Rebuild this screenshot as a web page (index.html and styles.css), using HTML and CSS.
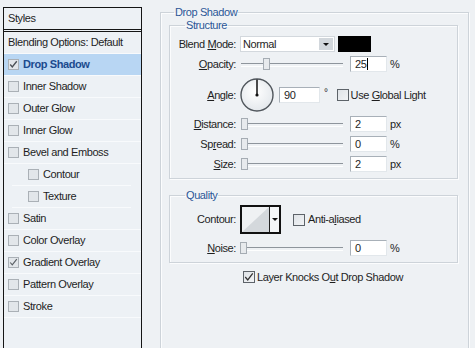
FILE: index.html
```html
<!DOCTYPE html>
<html>
<head>
<meta charset="utf-8">
<title>Layer Style - Drop Shadow</title>
<link rel="stylesheet" href="styles.css">
</head>
<body>
<div class="dialog">
  <aside class="styles">
    <div class="styles-head">Styles</div>
    <div class="style-row plain">Blending Options: Default</div>
    <div class="style-row active"><span class="cb"><svg viewBox="0 0 11 11" width="9" height="9"><path d="M1.5 5.5 L4 8.5 L9.5 1.5" fill="none" stroke="#4a4f55" stroke-width="1.6"/></svg></span>Drop Shadow</div>
    <div class="style-row"><span class="cb"></span>Inner Shadow</div>
    <div class="style-row"><span class="cb"></span>Outer Glow</div>
    <div class="style-row"><span class="cb"></span>Inner Glow</div>
    <div class="style-row"><span class="cb"></span>Bevel and Emboss</div>
    <div class="style-row sub"><span class="cb"></span>Contour</div>
    <div class="style-row sub"><span class="cb"></span>Texture</div>
    <div class="style-row"><span class="cb"></span>Satin</div>
    <div class="style-row"><span class="cb"></span>Color Overlay</div>
    <div class="style-row"><span class="cb"><svg viewBox="0 0 11 11" width="9" height="9"><path d="M1.5 5.5 L4 8.5 L9.5 1.5" fill="none" stroke="#5a5f65" stroke-width="1.4"/></svg></span>Gradient Overlay</div>
    <div class="style-row"><span class="cb"></span>Pattern Overlay</div>
    <div class="style-row"><span class="cb"></span>Stroke</div>
  </aside>

  <main class="panel">
    <fieldset class="group outer">
      <legend>Drop Shadow</legend>

      <fieldset class="group sub structure">
        <legend>Structure</legend>
        <div class="row">
          <span class="lbl">Blend <u>M</u>ode:</span>
          <div class="select"><span>Normal</span><span class="sel-btn"><span class="tri"></span></span></div>
          <div class="swatch"></div>
        </div>
        <div class="row">
          <span class="lbl"><u>O</u>pacity:</span>
          <div class="slider"><span class="thumb" style="left:23px"></span></div>
          <div class="field">25<span class="caret"></span></div>
          <span class="unit">%</span>
        </div>
        <div class="row angle">
          <span class="lbl"><u>A</u>ngle:</span>
          <svg class="dial" viewBox="0 0 34 34" width="34" height="34">
            <defs>
              <radialGradient id="dg" cx="0.45" cy="0.4" r="0.6">
                <stop offset="0" stop-color="#ffffff"/>
                <stop offset="1" stop-color="#e4e8ec"/>
              </radialGradient>
            </defs>
            <circle cx="17" cy="17" r="16" fill="url(#dg)" stroke="#50565c" stroke-width="1.4"/>
            <line x1="17" y1="17" x2="17" y2="1.5" stroke="#111" stroke-width="1.5"/>
            <circle cx="17" cy="17" r="1.6" fill="#111"/>
          </svg>
          <div class="field wide">90</div>
          <span class="deg">°</span>
          <span class="cb2"></span>
          <span class="cb-label">Use <u>G</u>lobal Light</span>
        </div>
        <div class="row">
          <span class="lbl"><u>D</u>istance:</span>
          <div class="slider"><span class="thumb" style="left:1px"></span></div>
          <div class="field">2</div>
          <span class="unit">px</span>
        </div>
        <div class="row">
          <span class="lbl">Sp<u>r</u>ead:</span>
          <div class="slider"><span class="thumb" style="left:1px"></span></div>
          <div class="field">0</div>
          <span class="unit">%</span>
        </div>
        <div class="row">
          <span class="lbl"><u>S</u>ize:</span>
          <div class="slider"><span class="thumb" style="left:1px"></span></div>
          <div class="field">2</div>
          <span class="unit">px</span>
        </div>
      </fieldset>

      <fieldset class="group sub quality">
        <legend>Quality</legend>
        <div class="row contour">
          <span class="lbl">Contour:</span>
          <div class="picker">
            <svg class="preview" viewBox="0 0 27 25" width="27" height="25" preserveAspectRatio="none">
              <rect x="0" y="0" width="27" height="25" fill="#eff1f3"/>
              <polygon points="0,25 27,0 27,25" fill="#d4d8dc"/>
            </svg>
            <span class="pick-btn"><span class="tri"></span></span>
          </div>
          <span class="cb2 aa"></span>
          <span class="cb-label">Anti-a<u>l</u>iased</span>
        </div>
        <div class="row noise">
          <span class="lbl"><u>N</u>oise:</span>
          <div class="slider"><span class="thumb" style="left:0px"></span></div>
          <div class="field">0</div>
          <span class="unit">%</span>
        </div>
      </fieldset>

      <div class="knock">
        <span class="cb2"><svg viewBox="0 0 12 12" width="10" height="10"><path d="M1.5 6 L4.5 9.5 L10.5 1.5" fill="none" stroke="#333" stroke-width="1.5"/></svg></span>
        <span class="cb-label">Layer Knocks O<u>u</u>t Drop Shadow</span>
      </div>
    </fieldset>
  </main>
</div>
</body>
</html>
```
FILE: styles.css
```css
* { box-sizing: border-box; }
html, body { margin: 0; padding: 0; }
body {
  width: 475px;
  height: 348px;
  overflow: hidden;
  background: #eef1f4;
  font: 11px/13px "Liberation Sans", Arial, sans-serif;
  letter-spacing: -0.4px;
  color: #1e1e1e;
}
.dialog {
  display: flex;
  align-items: flex-start;
  height: 348px;
  overflow: hidden;
}

/* ---------- Styles list ---------- */
.styles {
  margin: 7px 0 0 3px;
  width: 139px;
  height: 341px;
  flex: none;
  border: 1px solid #151515;
  border-bottom: none;
  background: #edf1f5;
}
.styles-head {
  height: 24px;
  padding-left: 4px;
  border-bottom: 3px double #151515;
  display: flex;
  align-items: center;
}
.style-row {
  height: 22px;
  border-bottom: 1px solid #f8fafc;
  display: flex;
  align-items: center;
  gap: 4px;
  padding-left: 4px;
  white-space: nowrap;
}
.style-row.sub { padding-left: 16px; }
.style-row.active {
  background: #b8d6f3;
  color: #1b4a8e;
  font-weight: bold;
}
.cb {
  width: 11px;
  height: 11px;
  flex: none;
  border: 1px solid #aab0b6;
  background: #e2e6ea;
  display: inline-flex;
  align-items: center;
  justify-content: center;
}

/* ---------- Right panel ---------- */
.panel {
  margin: 6px 0 0 18px;
  width: 309px;
  flex: none;
}
.group {
  margin: 0;
  padding: 0;
  min-width: 0;
  border: 1px solid #cdd3d9;
  box-shadow: inset 1px 1px 0 #fbfcfd, 1px 1px 0 #fbfcfd;
}
.group > legend {
  padding: 0 1px;
  line-height: 13px;
  color: #2b5797;
}
.outer { height: 342px; border-bottom: none; }
.outer > legend { margin-left: 13px; }
.sub { margin: 0 10px 0 8px; }
.sub > legend { margin-left: 15px; }
.structure { padding-bottom: 6px; }
.quality { margin-top: 10px; padding-bottom: 6px; }

.row {
  display: flex;
  align-items: center;
  height: 16px;
  margin-top: 4px;
  white-space: nowrap;
}
.row.angle { height: 34px; margin-top: 6px; }
.row.contour { height: 29px; margin-top: 3px; }
.row.noise { margin-top: 6px; }
.lbl {
  width: 66px;
  flex: none;
  text-align: right;
  margin-right: 4px;
}

.select {
  width: 95px;
  height: 16px;
  background: #fff;
  border: 1px solid #d3d8dd;
  display: flex;
  align-items: center;
  justify-content: space-between;
  padding-left: 2px;
}
.sel-btn {
  width: 14px;
  height: 12px;
  margin-right: 1px;
  background: #d2d7dc;
  display: flex;
  align-items: center;
  justify-content: center;
}
.tri {
  width: 0;
  height: 0;
  border-left: 3px solid transparent;
  border-right: 3px solid transparent;
  border-top: 3px solid #111;
}
.swatch {
  width: 33px;
  height: 16px;
  margin-left: 3px;
  background: #000;
}

.slider {
  position: relative;
  width: 103px;
  height: 16px;
  margin-right: 7px;
  flex: none;
}
.slider::before {
  content: "";
  position: absolute;
  left: 1px;
  right: 0;
  top: 7px;
  height: 2px;
  border-top: 1px solid #8e959c;
  border-bottom: 1px solid #fdfefe;
}
.thumb {
  position: absolute;
  top: 2px;
  width: 7px;
  height: 12px;
  background: #e7eaed;
  border: 1px solid #a5acb3;
}

.field {
  width: 37px;
  height: 16px;
  flex: none;
  background: #fff;
  border: 1px solid;
  border-color: #a8b0b8 #e2e7eb #e2e7eb #a8b0b8;
  padding-left: 4px;
  line-height: 14px;
  display: flex;
  align-items: center;
}
.field.wide { width: 41px; margin-left: 5px; }
.caret {
  width: 1px;
  height: 12px;
  background: #000;
  margin-left: 1px;
}
.unit { margin-left: 3px; }
.deg { margin-left: 4px; align-self: flex-start; margin-top: 8px; font-size: 10px; }

.cb2 {
  width: 12px;
  height: 12px;
  flex: none;
  border: 1px solid #5d6369;
  background: linear-gradient(135deg, #dfe3e7, #f1f3f5);
  display: inline-flex;
  align-items: center;
  justify-content: center;
}
.angle .cb2 { margin-left: 9px; }
.cb-label { margin-left: 2px; }
.cb2.aa { margin-left: 12px; }
.contour .cb-label { margin-left: 3px; }

.picker {
  width: 41px;
  height: 29px;
  flex: none;
  border: 2px solid #111;
  display: flex;
  background: #f4f6f8;
}
.preview { display: block; }
.pick-btn {
  width: 10px;
  border-left: 1px solid #222;
  display: flex;
  align-items: center;
  justify-content: center;
}

.knock {
  display: flex;
  align-items: center;
  height: 16px;
  margin-top: 6px;
  padding-left: 82px;
  white-space: nowrap;
}
```
